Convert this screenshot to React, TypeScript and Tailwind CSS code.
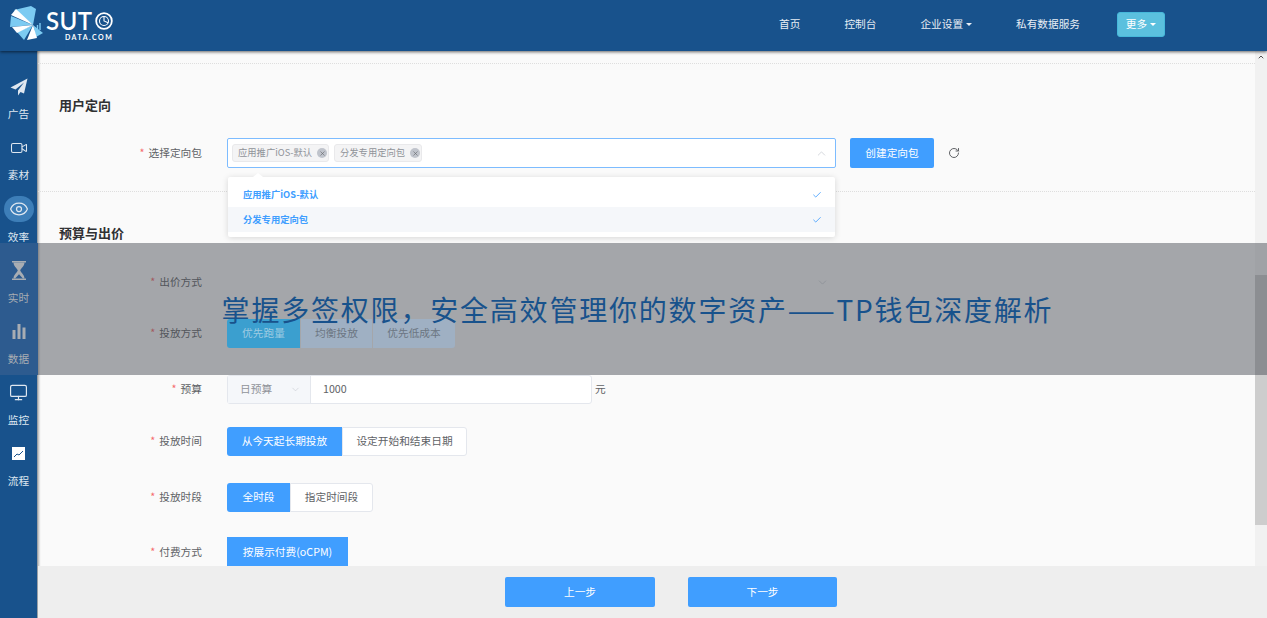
import { Check, ChevronDown, ChevronUp, RotateCw, Video, Eye, Monitor, X } from "lucide-react";

const cjk = "font-['Noto_Sans_CJK_SC','Liberation_Sans',sans-serif]";

function Plane() {
  return (
    <svg width="18" height="18" viewBox="0 0 18 18" fill="currentColor">
      <path d="M17.5 0.5 L0.5 9.5 L5.5 11.5 L14 4.5 L8 12.5 L8 17.5 L10.5 14 L14 15.5 Z" />
    </svg>
  );
}

function Glass() {
  return (
    <svg width="16" height="19" viewBox="0 0 16 19" fill="currentColor">
      <path d="M1 0h14v1.6H1z M1 17.4h14V19H1z" />
      <path d="M2.5 1.6h11c0 3.5-3.4 5.7-4.3 7.9 0.9 2.2 4.3 4.4 4.3 7.9h-1.6L8 13.2 4.1 17.4H2.5c0-3.5 3.4-5.7 4.3-7.9C5.9 7.3 2.5 5.1 2.5 1.6z" />
    </svg>
  );
}

function Bars() {
  return (
    <svg width="14" height="15" viewBox="0 0 14 15" fill="currentColor">
      <rect x="0.5" y="6" width="3" height="9" />
      <rect x="5.5" y="0" width="3" height="15" />
      <rect x="10.5" y="3.5" width="3" height="11.5" />
    </svg>
  );
}

function ChartBox() {
  return (
    <svg width="13" height="13" viewBox="0 0 13 13">
      <rect width="13" height="13" fill="#ffffff" />
      <path d="M2 10 L5 7 L7 8 L11 4" stroke="#18528c" strokeWidth="1" fill="none" />
    </svg>
  );
}

const navItems = [
  { label: "广告", icon: <Plane /> },
  { label: "素材", icon: <Video size={18} strokeWidth={1.4} /> },
  { label: "效率", icon: <Eye size={20} strokeWidth={1.5} />, active: true },
  { label: "实时", icon: <Glass />, dim: true },
  { label: "数据", icon: <Bars />, dim: true },
  { label: "监控", icon: <Monitor size={19} strokeWidth={1.5} /> },
  { label: "流程", icon: <ChartBox /> },
];

function Logo() {
  const pale = [
    "M23 19 L4 4 L21 0 L26 3 Z",
    "M23 19 L1 10 L0 21 Z",
    "M23 19 L7 26 L14 34 Z",
    "M23 19 L26 31 L33 27 Z",
  ];
  const white = [
    "M23 19 L1 9 L6 3 Z",
    "M23 19 L2 21 L7 27 Z",
    "M23 19 L17 34 L27 32 Z",
  ];
  return (
    <div className="flex items-start">
      <svg width="36" height="36" viewBox="0 0 36 36" className="mt-[6px] ml-[10px]">
        {pale.map((d) => (
          <path key={d} d={d} fill="#7ccbf2" />
        ))}
        {white.map((d) => (
          <path key={d} d={d} fill="#ffffff" />
        ))}
        <path d="M25 24v-3 M27.5 24v-5 M30 24v-7" stroke="#7ccbf2" strokeWidth="1.4" />
      </svg>
      <div className="flex flex-col items-end">
        <div className="flex items-center h-[20px] mt-[11px] font-['Lato',sans-serif] text-[24px] font-semibold leading-none text-white tracking-[0.4px]">
          SUT
          <svg width="18" height="18" viewBox="0 0 20 20" className="ml-[3px]">
            <circle cx="10" cy="10" r="8.7" stroke="#ffffff" strokeWidth="2" fill="none" />
            <circle cx="10" cy="10" r="5" stroke="#ffffff" strokeWidth="1.2" fill="none" />
            <path d="M10 5 V10 L14.5 12" stroke="#ffffff" strokeWidth="1.2" fill="none" />
          </svg>
        </div>
        <div className="mt-[2px] font-['Lato',sans-serif] text-[7px] leading-[9px] font-bold text-white tracking-[1.5px]">DATA.COM</div>
      </div>
    </div>
  );
}

function Label({ children }: { children: string }) {
  return (
    <div className="w-[175px] pr-[11px] text-right text-[10.7px] text-[#606266] shrink-0">
      <span className="text-[#f56c6c] mr-[4px]">*</span>
      {children}
    </div>
  );
}

function Seg({ on, w, children }: { on?: boolean; w: string; children: string }) {
  return (
    <div
      className={`h-[29px] flex items-center justify-center text-[10.7px] first:rounded-l-[3px] last:rounded-r-[3px] ${w} ${
        on ? "bg-[#409eff] text-white" : "bg-white text-[#606266] border border-[#e4e7ed]"
      }`}
    >
      {children}
    </div>
  );
}

function Tag({ w, children }: { w: string; children: string }) {
  return (
    <div className={`h-[18px] ${w} flex items-center justify-between pl-[5px] pr-[1px] bg-[#f4f4f5] border border-[#e9e9eb] rounded-[3px] text-[9.3px] text-[#909399]`}>
      {children}
      <span className="w-[10px] h-[10px] rounded-full bg-[#c0c4cc] flex items-center justify-center">
        <X size={7} color="#606266" strokeWidth={2} />
      </span>
    </div>
  );
}

function Option({ hover, children }: { hover?: boolean; children: string }) {
  return (
    <div className={`h-[25px] flex items-center justify-between pl-[15px] pr-[13px] text-[9.3px] font-bold text-[#409eff] ${hover ? "bg-[#f5f7fa]" : ""}`}>
      {children}
      <Check size={10} strokeWidth={2} />
    </div>
  );
}

export default function App() {
  return (
    <div className={`relative h-[618px] w-[1267px] overflow-hidden bg-[#fafafa] ${cjk}`}>
      <header className="relative z-[5] h-[51px] bg-[#18528c] shadow-[0_1px_3px_rgba(0,0,0,0.6)] flex items-start justify-between pr-[102px]">
        <Logo />
        <nav className="flex items-center h-[48px] gap-[44px] text-[10.67px] text-[#e8eef5]">
          <span>首页</span>
          <span>控制台</span>
          <span className="flex items-center gap-[3px]">
            企业设置
            <span className="border-x-[3px] border-t-[3px] border-x-transparent border-t-[#e8eef5]" />
          </span>
          <span>私有数据服务</span>
          <span className="-ml-[7px] h-[25px] w-[48px] flex items-center justify-center gap-[3px] rounded-[3px] bg-[#5bc0de] border border-[#46b8da] text-white">
            更多
            <span className="border-x-[3px] border-t-[3px] border-x-transparent border-t-white" />
          </span>
        </nav>
      </header>

      <div className="flex h-[567px]">
        <aside className="w-[38px] shrink-0 bg-[#18528c] border-r border-[#9aa0a6] shadow-[1px_0_2px_rgba(0,0,0,0.3)] pt-[9px] flex flex-col">
          {navItems.map((n) => (
            <div
              key={n.label}
              className={`h-[61.2px] flex flex-col items-center ${n.dim ? "relative z-[12] text-[#a8adb3]" : "text-[#dfe7f0]"}`}
            >
              <div className={`h-[30px] w-[30px] rounded-full flex items-center justify-center mt-[14px] ${n.active ? "bg-[#3d7eb8]" : ""}`}>
                {n.icon}
              </div>
              <span className="text-[10.67px] leading-[14px] mt-[8px]">{n.label}</span>
            </div>
          ))}
        </aside>

        <main className="flex-1 flex flex-col min-w-0">
          <div className="flex-1 flex min-h-0">
            <div className="flex-1 min-w-0 overflow-hidden pt-[12px]">
              <div className="border-t border-dotted border-[#dedede]" />
              <h2 className="mt-[32px] ml-[21px] text-[13px] leading-[18px] font-bold text-[#303133]">用户定向</h2>

              <div className="relative mt-[24px] flex items-center h-[30px]">
                <Label>选择定向包</Label>
                <div className="ml-[14px] w-[609px] h-[30px] flex items-center justify-between pl-[4px] pr-[7px] bg-white border border-[#7dbcff] rounded-[2px]">
                  <div className="flex gap-[5px]">
                    <Tag w="w-[97px]">应用推广iOS-默认</Tag>
                    <Tag w="w-[88px]">分发专用定向包</Tag>
                  </div>
                  <ChevronUp size={13} color="#c0c4cc" strokeWidth={1.2} />
                </div>
                <div className="ml-[14px] w-[84px] h-[30px] flex items-center justify-center rounded-[2px] bg-[#409eff] text-white text-[10.7px]">创建定向包</div>
                <RotateCw size={12} color="#606266" strokeWidth={2} className="ml-[14px]" />

                <div className="absolute z-[3] left-[190px] top-[39px] w-[607px] h-[60px] py-[5px] bg-white rounded-[2px] shadow-[0_1px_6px_rgba(0,0,0,0.15)]">
                  <div className="absolute -top-[4px] left-[25px] border-x-[5px] border-b-[4px] border-x-transparent border-b-white" />
                  <Option>应用推广iOS-默认</Option>
                  <Option hover>分发专用定向包</Option>
                </div>
              </div>

              <div className="mt-[23px] border-t border-dotted border-[#dedede]" />
              <h2 className="mt-[32px] ml-[21px] text-[13px] leading-[18px] font-bold text-[#303133]">预算与出价</h2>

              <div className="mt-[26px] flex items-center h-[29px]">
                <Label>出价方式</Label>
                <div className="ml-[14px] w-[609px] flex justify-end pr-[7px]">
                  <ChevronDown size={13} color="#c0c4cc" strokeWidth={1.2} />
                </div>
              </div>

              <div className="mt-[22px] flex items-center h-[29px]">
                <Label>投放方式</Label>
                <div className="relative z-[12] ml-[14px] flex gap-[1px]">
                  <div className="w-[73px] h-[29px] flex items-center justify-center rounded-l-[3px] bg-[#3b9fcf] text-[10.7px] text-[#9ecbe2]">优先跑量</div>
                  <div className="w-[71px] h-[29px] flex items-center justify-center bg-[#9fb0c3] text-[10.7px] text-[#6c7682]">均衡投放</div>
                  <div className="w-[82px] h-[29px] flex items-center justify-center rounded-r-[3px] bg-[#9fb0c3] text-[10.7px] text-[#6c7682]">优先低成本</div>
                </div>
              </div>

              <div className="mt-[27px] flex items-center h-[29px]">
                <Label>预算</Label>
                <div className="ml-[14px] w-[365px] h-[29px] flex bg-white border border-[#e4e7ed] rounded-[3px] text-[10.7px]">
                  <div className="w-[83px] flex items-center justify-between pl-[12px] pr-[9px] bg-[#f5f7fa] border-r border-[#e4e7ed] text-[#909399]">
                    日预算
                    <ChevronDown size={11} color="#c0c4cc" strokeWidth={1.2} />
                  </div>
                  <div className="flex items-center pl-[12px] text-[#606266]">1000</div>
                </div>
                <span className="ml-[3px] text-[10.7px] text-[#606266]">元</span>
              </div>

              <div className="mt-[22px] flex items-center h-[30px]">
                <Label>投放时间</Label>
                <div className="ml-[14px] flex">
                  <Seg on w="w-[115px]">从今天起长期投放</Seg>
                  <Seg w="w-[125px]">设定开始和结束日期</Seg>
                </div>
              </div>

              <div className="mt-[26px] flex items-center h-[30px]">
                <Label>投放时段</Label>
                <div className="ml-[14px] flex">
                  <Seg on w="w-[63px]">全时段</Seg>
                  <Seg w="w-[83px]">指定时间段</Seg>
                </div>
              </div>

              <div className="mt-[25px] flex items-center h-[30px]">
                <Label>付费方式</Label>
                <div className="ml-[14px] flex">
                  <div className="w-[121px] h-[30px] flex items-center justify-center bg-[#409eff] text-white text-[10.7px]">按展示付费(oCPM)</div>
                </div>
              </div>
            </div>

            <div className="w-[12px] shrink-0 bg-[#f1f1f1] flex flex-col relative">
              <div className="h-[10px] flex items-center justify-center mt-[1px]">
                <ChevronUp size={8} color="#505050" strokeWidth={3} />
              </div>
              <div className="mt-[213px] h-[250px] bg-[#cdcdcd]" />
            </div>
          </div>

          <footer className="h-[52px] shrink-0 bg-[#eeeeee] flex items-start gap-[33px] pt-[11px] pl-[467px] text-[10.7px] text-white">
            <div className="w-[150px] h-[30px] flex items-center justify-center rounded-[2px] bg-[#409eff]">上一步</div>
            <div className="w-[149px] h-[30px] flex items-center justify-center rounded-[2px] bg-[#409eff]">下一步</div>
          </footer>
        </main>
      </div>

      {/* banner over the page, the sidebar part is tinted differently */}
      <div className="absolute z-10 left-0 w-[38px] top-[243px] h-[132px] bg-[#2d5b8f]" />
      <div className="absolute z-10 left-[38px] right-0 top-[243px] h-[132px] bg-[rgba(69,73,80,0.47)]" />
      <div className="absolute z-20 left-0 right-0 top-[243px] h-[132px] flex items-center justify-center pl-[8px] text-[28px] tracking-[1.8px] text-[#18528c] whitespace-nowrap">
        掌握多签权限，安全高效管理你的数字资产——TP钱包深度解析
      </div>
    </div>
  );
}
